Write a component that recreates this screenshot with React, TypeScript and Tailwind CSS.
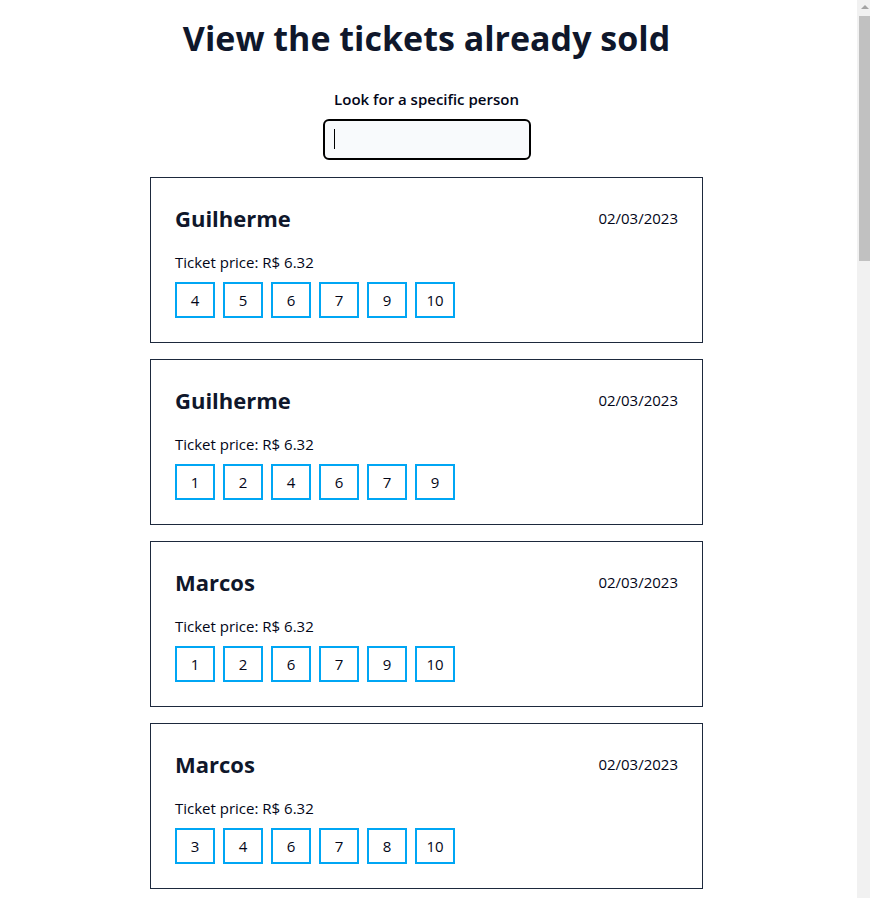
import React from 'react';

type Sale = { name: string; date: string; price: string; numbers: number[] };

const sales: Sale[] = [
  { name: 'Guilherme', date: '02/03/2023', price: '6.32', numbers: [4, 5, 6, 7, 9, 10] },
  { name: 'Guilherme', date: '02/03/2023', price: '6.32', numbers: [1, 2, 4, 6, 7, 9] },
  { name: 'Marcos', date: '02/03/2023', price: '6.32', numbers: [1, 2, 6, 7, 9, 10] },
  { name: 'Marcos', date: '02/03/2023', price: '6.32', numbers: [3, 4, 6, 7, 8, 10] },
];

const SaleCard = ({ sale }: { sale: Sale }) => (
  <div className="w-[553px] border border-slate-800 p-6">
    <div className="flex items-center justify-between">
      <h2 className="text-[22px] leading-8 font-bold text-slate-900">{sale.name}</h2>
      <span className="text-[15px] text-slate-950">{sale.date}</span>
    </div>
    <p className="mt-4 text-[15px] leading-6 text-slate-950">Ticket price: R$ {sale.price}</p>
    <div className="mt-2 flex gap-2">
      {sale.numbers.map((n) => (
        <span
          key={n}
          className="flex h-9 w-10 items-center justify-center border-2 border-sky-500 text-[15px] text-slate-950"
        >
          {n}
        </span>
      ))}
    </div>
  </div>
);

// fake browser scrollbar, as seen in the screenshot
const Scrollbar = () => (
  <div className="fixed top-0 right-0 h-screen w-[13px] bg-[#f1f1f1]">
    <div className="absolute top-[5px] left-[4px] h-0 w-0 border-x-[4px] border-b-[4px] border-x-transparent border-b-[#a3a3a3]" />
    <div className="absolute top-[16px] right-0 left-[2px] h-[245px] bg-[#c1c1c1]" />
  </div>
);

export default function App() {
  return (
    <div className="flex flex-col items-center bg-white pt-[18px] pr-[17px] font-['Open_Sans',sans-serif]">
      <h1 className="text-[34px] leading-10 font-bold text-slate-900">View the tickets already sold</h1>
      <label className="mt-[29px] text-[15px] leading-6 font-semibold text-slate-950">Look for a specific person</label>
      <div className="relative mt-2">
        <input className="h-[41px] w-[208px] rounded-md border-2 border-black bg-slate-50 px-2 outline-none" />
        <span className="absolute top-[10px] left-[11px] h-5 w-px bg-black" />
      </div>
      <div className="mt-[17px] flex flex-col gap-4">
        {sales.map((s, i) => (
          <SaleCard key={i} sale={s} />
        ))}
      </div>
      <Scrollbar />
    </div>
  );
}
